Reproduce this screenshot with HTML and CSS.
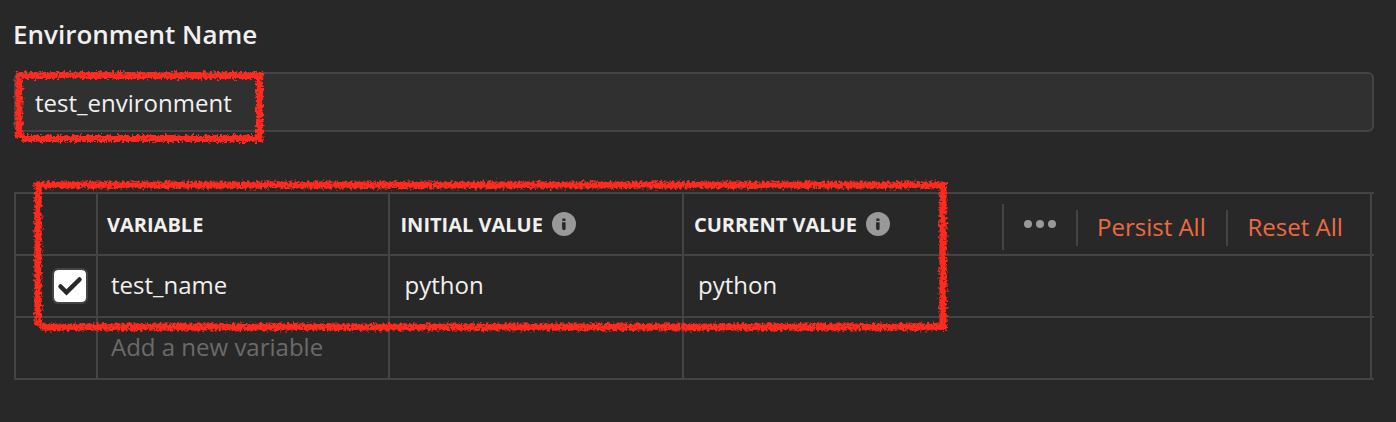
FILE: index.html
```html
<!DOCTYPE html>
<html lang="en">
<head>
<meta charset="utf-8">
<title>Environment</title>
<link rel="stylesheet" href="styles.css">
</head>
<body>
<main class="page">
  <h1 class="title">Environment Name</h1>
  <div class="name-input">test_environment</div>

  <div class="table">
    <div class="row head">
      <div class="cell check"></div>
      <div class="cell variable">VARIABLE</div>
      <div class="cell initial"><span>INITIAL VALUE</span>
        <svg class="info" viewBox="0 0 24 24"><circle cx="12" cy="12" r="12"/><rect x="10.200" y="6.500" width="3.400" height="2.600" rx="1"/><path d="M10 10.300h3.600v6.200q0 1.700-1.700 1.700t-1.700-1.700z"/></svg>
      </div>
      <div class="cell current"><span>CURRENT VALUE</span>
        <svg class="info" viewBox="0 0 24 24"><circle cx="12" cy="12" r="12"/><rect x="10.200" y="6.500" width="3.400" height="2.600" rx="1"/><path d="M10 10.300h3.600v6.200q0 1.700-1.700 1.700t-1.700-1.700z"/></svg>
        <div class="actions">
          <div class="more"><svg class="dots" viewBox="0 0 32 8"><circle cx="4" cy="4" r="4"/><circle cx="16" cy="4" r="4"/><circle cx="28" cy="4" r="4"/></svg></div>
          <div class="action persist">Persist All</div>
          <div class="action reset">Reset All</div>
        </div>
      </div>
    </div>
    <div class="row">
      <div class="cell check"><span class="checkbox"><svg class="tick" viewBox="0 0 32 32"><path d="M6.500 16.500l6 5.800L25.500 9.500"/></svg></span></div>
      <div class="cell variable">test_name</div>
      <div class="cell initial">python</div>
      <div class="cell current">python</div>
    </div>
    <div class="row">
      <div class="cell check"></div>
      <div class="cell variable placeholder">Add a new variable</div>
      <div class="cell initial"></div>
      <div class="cell current"></div>
    </div>
  </div>
</main>

<svg class="marks" viewBox="0 0 1396 422">
  <defs>
    <filter id="crayon" filterUnits="userSpaceOnUse" x="0" y="0" width="1396" height="422" color-interpolation-filters="sRGB">
      <feTurbulence type="fractalNoise" baseFrequency="0.4" numOctaves="2" seed="7" result="noise"/>
      <feDisplacementMap in="SourceGraphic" in2="noise" scale="7" xChannelSelector="R" yChannelSelector="G" result="rough"/>
      <feTurbulence type="fractalNoise" baseFrequency="0.35" numOctaves="2" seed="21"/>
      <feColorMatrix values="0 0 0 0 0  0 0 0 0 0  0 0 0 0 0  0 0 0 8 -1.5" result="grain"/>
      <feComposite in="rough" in2="grain" operator="in"/>
      <feGaussianBlur stdDeviation="0.3"/>
    </filter>
  </defs>
  <g filter="url(#crayon)">
    <path d="M15.500 75.500H263.500M19 72V138M259.500 72V142M21 138.500H263.500"/>
    <path d="M34.500 185H947M38 182V325.500M943 182V331M40 327H947"/>
  </g>
</svg>
</body>
</html>
```
FILE: styles.css
```css
* { box-sizing: border-box; }
body {
  margin: 0;
  background: #282828;
  color: #f0f0f0;
  font: 24px/32px "Open Sans", "Noto Sans", sans-serif;
}
.page { width: 1396px; height: 422px; padding: 18px 22px 0 14px; overflow: hidden; }
.title { margin: 0 0 22px -1px; font-size: 26px; line-height: 32px; font-weight: 600; white-space: nowrap; }
.name-input {
  display: flex;
  align-items: center;
  height: 60px;
  margin-bottom: 60px;
  padding: 2px 0 0 19px;
  border: 2px solid #444;
  border-radius: 6px;
  background: #303030;
}
.table { border-top: 2px solid #444; border-left: 2px solid #444; }
.row { display: flex; height: 62px; padding-right: 2px; border-bottom: 2px solid #444; }
.cell {
  display: flex;
  align-items: center;
  border-right: 2px solid #444;
  padding: 0 0 2px 14.6px;
  white-space: nowrap;
}
.check { width: 82px; padding: 0 0 0 36px; }
.variable { width: 292px; padding-left: 13px; }
.initial { width: 294px; }
.current { flex: 1; padding-left: 14px; }
.head .cell { padding: 2px 0 0 11px; font-size: 20px; font-weight: 700; }
.head .variable { padding-left: 9px; }
.head .initial { padding-left: 10.5px; }
.head .current { padding-left: 10px; }
.info { width: 24px; height: 24px; margin: 0 0 2px 9px; fill: #999; }
.head .initial .info { margin-left: 9.5px; }
.info path, .info rect { fill: #282828; }
.checkbox {
  width: 36px;
  height: 36px;
  border: 2px solid #444;
  border-radius: 6px;
  background: #fff;
  background-clip: padding-box;
}
.tick { display: block; width: 32px; height: 32px; fill: none; stroke: #282828; stroke-width: 4.5; stroke-linecap: round; }
.placeholder { color: #6b6b6b; }
.actions { display: flex; align-items: center; margin: 4px 0 0 auto; font-size: 24px; font-weight: 400; color: #ed6b42; }
.more { display: flex; align-items: center; width: 74px; height: 46px; padding: 0 0 6px 20px; border-left: 2px solid #444; }
.dots { width: 32px; height: 8px; fill: #999; }
.action { display: flex; align-items: center; height: 36px; margin-top: 2px; padding-bottom: 2px; border-left: 2px solid #444; }
.persist { width: 150px; padding-left: 19px; }
.reset { width: 144px; padding-left: 19.5px; }
.marks { position: absolute; left: 0; top: 0; width: 1396px; height: 422px; fill: none; stroke: #ff2a1d; stroke-width: 7.2; pointer-events: none; }
```
